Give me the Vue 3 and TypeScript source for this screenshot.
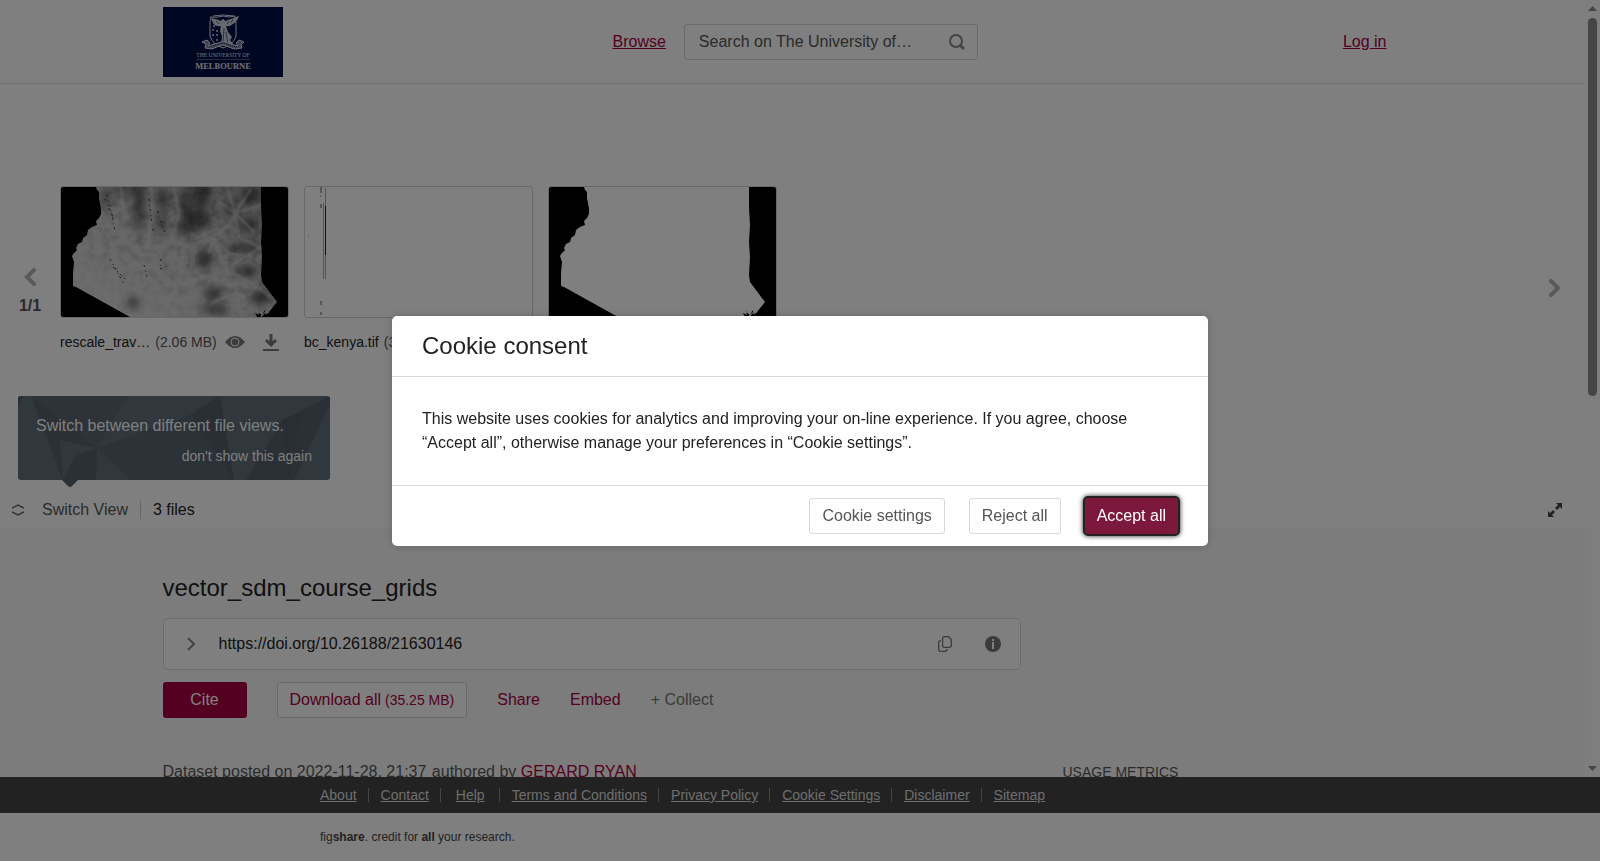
<script setup lang="ts">
import { ref } from 'vue'

interface FooterLink {
  label: string
  wide?: boolean
}

const query = ref('')
const footerLinks: FooterLink[] = [
  { label: 'About' },
  { label: 'Contact' },
  { label: 'Help', wide: true },
  { label: 'Terms and Conditions' },
  { label: 'Privacy Policy' },
  { label: 'Cookie Settings' },
  { label: 'Disclaimer' },
  { label: 'Sitemap' },
]

const files = [
  { id: 'travel', name: 'rescale_trav…', size: '(2.06 MB)' },
  { id: 'bc', name: 'bc_kenya.tif', size: '(33.1 MB)' },
  { id: 'mask', name: 'kenya_mask.tif', size: '(88 kB)' },
]

const land =
  'M35 0L36 3L38 5L38 11L39 16L40 22L40 27L38 31L35 34L36 38L31 40L27 43L26 48L22 51L21 55L17 57L15 61L16 63L13 66L11 69L13 75L12 86L12 99L15 100L69 130L196 130L194 126L198 128L197 124L201 128L204 123L205 127L208 125L216 115L201 95L200 88L201 70L200 55L201 38L200 20L200 0Z'

const darkSpots = [
  [78, 14, 5, 32], [102, 12, 6, 10], [137, 32, 13, 10], [140, 6, 9, 16], [124, 42, 10, 5],
  [62, 2, 12, 4], [143, 72, 8, 10], [152, 106, 10, 6], [154, 122, 14, 5], [188, 38, 8, 8],
  [200, 110, 10, 8], [170, 22, 6, 7], [72, 116, 6, 6], [175, 62, 6, 5], [186, 84, 12, 5],
  [101, 36, 3, 12], [45, 12, 4, 9], [190, 8, 10, 8], [188, 60, 8, 5], [124, 18, 5, 18],
]
</script>

<template>
  <div class="page">
    <div class="viewport">
      <div class="content">
        <header class="header">
          <div class="container header-row">
            <a href="#" class="logo" aria-label="The University of Melbourne">
              <svg viewBox="0 0 240 140" width="120" height="70">
                <rect width="240" height="140" fill="#000f46" />
                <svg viewBox="0 0 120 70" width="240" height="140">
                  <g fill="none" stroke="#dfe2ec" stroke-width="1">
                    <path d="M47 14Q49 12 47 10Q54 11 60 9Q66 11 72 9Q71 12 73 15V29Q71 37 60 41Q49 37 47 29Z" />
                    <path d="M50 9Q60 7 71 9" />
                  </g>
                  <g fill="#cfd3e0">
                    <path d="M48 11Q54 12 58 14Q60 10 62 14Q68 12 76 9Q74 15 70 17Q66 20 63 19L65 25L69 30L67 33L71 38L58 38L59 29L57 24L58 19Q53 20 50 16Z" />
                    <circle cx="50" cy="23" r="1" /><circle cx="54" cy="24" r="1" />
                    <circle cx="50" cy="28" r="1" /><circle cx="54" cy="28" r="1" /><circle cx="54" cy="33" r="1" />
                    <circle cx="51" cy="19" r="1" />
                  </g>
                  <path d="M61 21L60 37M63 25L65 37M53 14L56 17M66 14L64 17M70 12L68 16" stroke="#000f46" stroke-opacity="0.6" stroke-width="1" />
                  <path d="M39 35L44 33L47 36L45 39Q52 37 55 36Q60 33 65 36Q70 38 75 39L73 36L76 33L81 35L78 38L79 41L71 42Q66 40 60 38Q53 40 49 42L42 41L43 37Z" fill="#7d86a4" stroke="#dfe2ec" stroke-width="1" />
                  <path d="M46 40Q53 38 56 37Q60 35 64 37Q69 39 74 40" fill="none" stroke="#000f46" stroke-width="1" stroke-dasharray="1 1" />
                </svg>
                <path d="M67 105H173" stroke="#98a0bc" stroke-width="1" />
                <text x="120" y="100" text-anchor="middle" class="logo-small">THE UNIVERSITY OF</text>
                <text x="120" y="124" text-anchor="middle" class="logo-large">MELBOURNE</text>
              </svg>
            </a>
            <a href="#" class="link browse">Browse</a>
            <form class="search" @submit.prevent>
              <input v-model="query" type="text" aria-label="Search" placeholder="Search on The University of…" />
              <button type="submit" aria-label="Search">
                <svg viewBox="0 0 16 16" width="16" height="16">
                  <circle cx="7" cy="7" r="6" fill="none" stroke="#888" stroke-width="2" />
                  <path d="M11 11L15 15" stroke="#888" stroke-width="3" />
                </svg>
              </button>
            </form>
            <a href="#" class="link login">Log in</a>
          </div>
        </header>

        <section class="viewer">
          <div class="carousel">
            <div class="pager">
              <button type="button" class="icon-button" aria-label="Previous">
                <svg viewBox="0 0 12 18" width="12" height="18">
                  <path d="M10 2L3 9L10 16" fill="none" stroke="#b4b4b4" stroke-width="4" stroke-linecap="round" />
                </svg>
              </button>
              <span>1/1</span>
            </div>
            <ul class="files">
              <li v-for="file in files" :key="file.id">
                <div class="thumb">
                  <svg v-if="file.id === 'travel'" viewBox="0 0 227 130">
                    <defs>
                      <clipPath id="land-clip"><path :d="land" /></clipPath>
                      <linearGradient id="terrain" x1="0" y1="1" x2="1" y2="0">
                        <stop offset="0" stop-color="#e0e0e0" />
                        <stop offset="0.5" stop-color="#cccccc" />
                        <stop offset="1" stop-color="#969696" />
                      </linearGradient>
                      <filter id="soft" x="-50%" y="-50%" width="200%" height="200%"><feGaussianBlur stdDeviation="4" /></filter>
                      <filter id="vein"><feGaussianBlur stdDeviation="1" /></filter>
                      <filter id="grain" x="0" y="0" width="100%" height="100%">
                        <feTurbulence type="fractalNoise" baseFrequency="0.12" numOctaves="3" seed="8" />
                        <feColorMatrix values="0 0 0 0 0  0 0 0 0 0  0 0 0 0 0  0.5 0 0 0 -0.2" />
                      </filter>
                      <linearGradient id="fade" x1="0" y1="1" x2="1" y2="0">
                        <stop offset="0.2" stop-color="#333" />
                        <stop offset="0.6" stop-color="#fff" />
                      </linearGradient>
                      <mask id="grain-mask"><rect width="227" height="130" fill="url(#fade)" /></mask>
                    </defs>
                    <rect width="227" height="130" fill="#000" />
                    <g clip-path="url(#land-clip)">
                      <rect width="227" height="130" fill="url(#terrain)" />
                      <g fill="#222" fill-opacity="0.65" filter="url(#soft)">
                        <ellipse v-for="(s, i) in darkSpots" :key="i" :cx="s[0]" :cy="s[1]" :rx="s[2]" :ry="s[3]" />
                      </g>
                      <g mask="url(#grain-mask)"><rect width="227" height="130" filter="url(#grain)" /></g>
                      <g fill="none" stroke="#d0d0d0" stroke-opacity="0.7" stroke-width="2" filter="url(#vein)">
                        <path d="M110 55Q134 60 152 50T174 26L201 18M174 26L166 0M174 26L194 46M174 26L190 2M174 26L156 14M174 26L178 50L201 62M152 50L164 78L176 106L180 130" />
                        <path d="M126 94Q148 92 164 82T201 60M164 82L190 96L210 110M170 95L196 102M176 106L150 116M176 106L192 122M152 50L168 66L190 70M112 0L118 26L110 55L96 74" />
                        <path d="M90 0L92 30L86 60M60 0L64 30L60 55M150 44L134 52M134 62L130 80L126 94L142 112M152 50L148 66" />
                      </g>
                      <g fill="none" stroke="#333" stroke-width="1" stroke-dasharray="2 4 1 3">
                        <path d="M44 12L51 28L54 44M46 8L52 32M88 12L91 38L93 48M97 24L101 38L104 46M49 72L56 84L62 96M52 80L64 92M83 78L86 90M100 72L99 82L108 78" />
                      </g>
                    </g>
                    <path d="M195 124L201 127L200 130M201 129L205 124M204 127L208 125" stroke="#ddd" fill="none" />
                  </svg>
                  <svg v-else-if="file.id === 'bc'" viewBox="0 0 227 130">
                    <g fill="#aaa">
                      <rect x="15" y="0" width="2" height="6" /><rect x="15" y="17" width="2" height="4" />
                      <rect x="15" y="114" width="2" height="4" /><rect x="15" y="125" width="2" height="3" />
                      <rect x="15" y="8" width="1" height="2" /><rect x="3" y="49" width="1" height="1" />
                      <rect x="18" y="16" width="1" height="76" /><rect x="20" y="1" width="1" height="91" />
                    </g>
                    <rect x="20" y="19" width="1" height="49" fill="#222" />
                  </svg>
                  <svg v-else viewBox="0 0 227 130">
                    <rect width="227" height="130" fill="#000" />
                    <path :d="land" fill="#fff" />
                    <path d="M195 124L201 127L200 130M201 129L205 124M204 127L208 125" stroke="#fff" fill="none" />
                  </svg>
                </div>
                <div class="caption">
                  <span class="name">{{ file.name }}</span>
                  <span class="size">{{ file.size }}</span>
                  <button type="button" class="icon-button eye" aria-label="View file">
                    <svg viewBox="0 0 20 12" width="20" height="12">
                      <path d="M0 6Q5 0 10 0T20 6Q15 12 10 12T0 6Z" fill="#777" />
                      <circle cx="10" cy="6" r="4" fill="#777" stroke="#fff" stroke-width="1" />
                    </svg>
                  </button>
                  <button type="button" class="icon-button download" aria-label="Download file">
                    <svg viewBox="0 0 16 17" width="16" height="17" fill="none" stroke="#777">
                      <path d="M8 0V11M3 6L8 11L13 6" stroke-width="3" />
                      <path d="M0 16H16" stroke-width="2" />
                    </svg>
                  </button>
                </div>
              </li>
            </ul>
            <button type="button" class="icon-button next" aria-label="Next">
              <svg viewBox="0 0 12 18" width="12" height="18">
                <path d="M2 2L9 9L2 16" fill="none" stroke="#b4b4b4" stroke-width="4" stroke-linecap="round" />
              </svg>
            </button>
          </div>

          <div class="hint">
            <svg class="hint-art" viewBox="0 0 312 84" preserveAspectRatio="none">
              <path d="M13 0L79 52L42 44L45 84Z" fill="#56616b" />
              <path d="M13 0H110L79 52Z" fill="#5b6772" />
              <path d="M79 52L174 18L200 0L216 84H112Z" fill="#566570" />
              <path d="M79 52L57 60L45 84H78Z" fill="#56606b" />
              <path d="M174 18L202 0L216 84L190 46Z" fill="#545e6a" />
              <path d="M228 84L264 24L312 0V8L276 84Z" fill="#56616c" />
              <path d="M264 24L284 16L270 84Z" fill="#525c68" />
              <path d="M0 0H5L0 10Z" fill="#505c66" />
            </svg>
            <p>Switch between different file views.</p>
            <button type="button">don't show this again</button>
            <svg class="tail" viewBox="0 0 16 8" width="16" height="8"><path d="M0 0H16L10 6Q8 8 6 6Z" fill="#56616b" /></svg>
          </div>

          <div class="view-bar">
            <button type="button" class="switch">
              <svg viewBox="0 0 12 12" width="12" height="12" fill="none" stroke="#666" stroke-width="1.500">
                <path d="M0 4L6 1L12 4M0 8L6 11L12 8" />
              </svg>
              <span>Switch View</span>
            </button>
            <span class="count">3 files</span>
            <button type="button" class="icon-button expand" aria-label="Full screen">
              <svg viewBox="0 0 14 14" width="14" height="14">
                <path d="M8 0H14V6L12 4L9 7L7 5L10 2ZM0 8L2 10L5 7L7 9L4 12L6 14H0Z" fill="#444" />
              </svg>
            </button>
          </div>
        </section>

        <main class="details container">
          <div class="main-column">
            <h1>vector_sdm_course_grids</h1>
            <div class="doi">
              <button type="button" class="icon-button" aria-label="Show versions">
                <svg viewBox="0 0 9 14" width="9" height="14"><path d="M1 1L7 7L1 13" fill="none" stroke="#888" stroke-width="2" /></svg>
              </button>
              <span class="doi-text">https://doi.org/10.26188/21630146</span>
              <button type="button" class="icon-button" aria-label="Copy DOI">
                <svg viewBox="0 0 14 16" width="14" height="16" fill="none" stroke="#777" stroke-width="1.300">
                  <path d="M6.500 0.700H10.500L13.300 3.500V9.500Q13.300 11.300 11.500 11.300H6.500Q4.600 11.300 4.600 9.500V2.500Q4.600 0.700 6.500 0.700Z" />
                  <path d="M3 4.600Q0.700 4.600 0.700 6.500V13.500Q0.700 15.300 2.500 15.300H7Q9 15.300 9 13" />
                </svg>
              </button>
              <button type="button" class="icon-button" aria-label="DOI information">
                <svg viewBox="0 0 16 16" width="16" height="16">
                  <circle cx="8" cy="8" r="8" fill="#777" />
                  <path d="M7 3H9V5H7ZM7 6H9V13H7Z" fill="#fff" />
                </svg>
              </button>
            </div>
            <div class="actions">
              <button type="button" class="cite">Cite</button>
              <button type="button" class="download-all">Download all<small> (35.25 MB)</small></button>
              <button type="button" class="plain">Share</button>
              <button type="button" class="plain">Embed</button>
              <button type="button" class="plain muted">+ Collect</button>
            </div>
            <p class="posted">
              <span>Dataset posted on 2022-11-28, 21:37</span> authored by <a href="#">GERARD RYAN</a>
            </p>
          </div>
          <aside><h2>USAGE METRICS</h2></aside>
        </main>
      </div>
      <div class="scrollbar" aria-hidden="true">
        <svg viewBox="0 0 9 5" width="9" height="5"><path d="M0 5L4.500 0L9 5Z" fill="#8a8a8a" /></svg>
        <div class="track"><div class="handle"></div></div>
        <svg viewBox="0 0 9 5" width="9" height="5"><path d="M0 0L4.500 5L9 0Z" fill="#8a8a8a" /></svg>
      </div>
    </div>

    <footer>
      <nav class="footer-nav">
        <ul>
          <li v-for="link in footerLinks" :key="link.label" :class="{ wide: link.wide }">
            <a href="#">{{ link.label }}</a>
          </li>
        </ul>
      </nav>
      <p class="credit">fig<b>share</b>. credit for <b>all</b> your research.</p>
    </footer>

    <div class="overlay">
      <div class="modal" role="dialog" aria-modal="true" aria-labelledby="cookie-title">
        <h2 id="cookie-title">Cookie consent</h2>
        <p>
          This website uses cookies for analytics and improving your on-line experience. If you agree, choose
          “Accept all”, otherwise manage your preferences in “Cookie settings”.
        </p>
        <div class="modal-actions">
          <button type="button">Cookie settings</button>
          <button type="button">Reject all</button>
          <button type="button" class="accept">Accept all</button>
        </div>
      </div>
    </div>
  </div>
</template>

<style>
body {
  margin: 0;
}
</style>

<style scoped>
.page {
  display: flex;
  flex-direction: column;
  height: 100vh;
  overflow: hidden;
  background: #fff;
  color: #222;
  font: 16px/24px "Liberation Sans", Arial, sans-serif;
}
.page * {
  box-sizing: border-box;
}
h1, h2, p, ul {
  margin: 0;
  padding: 0;
  font-weight: normal;
}
ul {
  list-style: none;
}
svg {
  display: block;
}
button {
  font: inherit;
  color: inherit;
  cursor: pointer;
}
.icon-button {
  padding: 0;
  border: 0;
  background: none;
}
.viewport {
  display: flex;
  flex: 1;
  min-height: 0;
}
.content {
  flex: 1;
  min-width: 0;
  overflow: hidden;
  background: #f9f9f9;
}
.container {
  max-width: 1260px;
  margin: 0 auto;
}
.header {
  background: #fff;
  border-bottom: 1px solid #d9d9d9;
}
.header-row {
  display: flex;
  align-items: center;
  padding: 7px 0 6px;
}
.logo-small,
.logo-large {
  font-family: "Liberation Serif", serif;
  fill: #dfe2ec;
}
.logo-small {
  font-size: 11px;
}
.logo-large {
  font-size: 17px;
  font-weight: bold;
}
.link,
.posted a {
  color: #a80042;
}
.browse {
  margin: 0 18px 0 330px;
}
.search {
  display: flex;
  align-items: center;
  width: 294px;
  height: 36px;
  padding: 0 12px 0 14px;
  border: 1px solid #d5d5d5;
  border-radius: 3px;
}
.search input {
  flex: 1;
  min-width: 0;
  padding: 0;
  border: 0;
  outline: 0;
  background: none;
  font: inherit;
}
.search input::placeholder {
  color: #555;
  opacity: 1;
}
.search button {
  padding: 0;
  border: 0;
  background: none;
}
.login {
  margin: 0 36px 0 auto;
}
.viewer {
  background: #fff;
  padding-top: 102px;
}
.carousel {
  display: flex;
  align-items: center;
  height: 204px;
  padding-right: 24px;
}
.pager {
  display: flex;
  flex-direction: column;
  align-items: center;
  gap: 8px;
  width: 60px;
  padding-top: 9px;
  color: #555;
  font-weight: bold;
}
.files {
  display: flex;
  flex: 1;
  gap: 15px;
  align-self: flex-start;
}
.files li {
  width: 229px;
}
.thumb {
  height: 132px;
  border: 1px solid #d0d0d0;
  border-radius: 3px;
  overflow: hidden;
}
.caption {
  display: flex;
  align-items: center;
  height: 20px;
  margin-top: 14px;
  font-size: 14px;
  line-height: 20px;
  white-space: nowrap;
}
.size {
  margin-left: 5px;
  color: #555;
}
.eye {
  margin-left: 8px;
}
.download {
  margin: 0 10px 0 auto;
}
.hint {
  position: relative;
  display: flex;
  flex-direction: column;
  width: 312px;
  margin: 6px 0 0 18px;
  padding: 18px 18px 14px;
  border-radius: 3px;
  background: #606e7a;
  color: #fff;
}
.hint p,
.hint button {
  position: relative;
}
.hint button {
  align-self: flex-end;
  margin-top: 8px;
  padding: 0;
  border: 0;
  background: none;
  font-size: 14px;
  line-height: 20px;
}
.hint-art {
  position: absolute;
  inset: 0;
  width: 100%;
  height: 100%;
  border-radius: 3px;
}
.tail {
  position: absolute;
  left: 44px;
  top: 100%;
}
.view-bar {
  display: flex;
  align-items: center;
  height: 36px;
  margin-top: 12px;
  padding: 0 23px 0 12px;
}
.switch {
  display: flex;
  align-items: center;
  gap: 18px;
  padding: 0;
  border: 0;
  background: none;
  color: #555;
}
.count {
  margin-left: 12px;
  padding-left: 12px;
  border-left: 1px solid #ccc;
  line-height: 18px;
}
.expand {
  margin-left: auto;
}
.details {
  display: flex;
  gap: 42px;
  padding-top: 42px;
}
.main-column {
  flex: 858 1 0;
}
.details aside {
  flex: 360 1 0;
  padding-top: 190px;
}
.details h2 {
  color: #555;
  font-size: 14px;
  line-height: 24px;
}
h1 {
  font-size: 24px;
  line-height: 36px;
}
.doi {
  display: flex;
  align-items: center;
  height: 52px;
  margin-top: 12px;
  padding: 0 19px 0 23px;
  border: 1px solid #d9d9d9;
  border-radius: 5px;
  background: #fff;
}
.doi-text {
  flex: 1;
  margin-left: 23px;
}
.doi button + button {
  margin-left: 33px;
}
.actions {
  display: flex;
  gap: 30px;
  margin-top: 12px;
  color: #a80042;
}
.actions button {
  height: 36px;
  padding: 0;
  border: 0;
  border-radius: 3px;
  background: none;
}
.actions .cite {
  width: 84px;
  background: #a80040;
  color: #fff;
}
.actions .download-all {
  padding: 0 12px;
  border: 1px solid #d5d5d5;
  background: #fff;
}
.download-all small {
  font-size: 14px;
}
.actions .muted {
  color: #777;
}
.posted {
  margin-top: 42px;
  color: #555;
  line-height: 24px;
}
.posted span {
  margin-right: 1px;
}
.posted a {
  text-decoration: none;
}
.scrollbar {
  display: flex;
  flex-direction: column;
  align-items: center;
  width: 15px;
  padding: 6px 0;
  background: #fcfcfc;
}
.track {
  flex: 1;
  margin: 7px 0;
}
.handle {
  width: 9px;
  height: 51%;
  border-radius: 5px;
  background: #8a8a8a;
}
.footer-nav {
  background: #444;
}
.footer-nav ul,
.credit {
  max-width: 960px;
  margin: 0 auto;
}
.footer-nav ul {
  display: flex;
  align-items: center;
  height: 36px;
  font-size: 14px;
  line-height: 14px;
}
.footer-nav li + li {
  margin-left: 11px;
  padding-left: 12px;
  border-left: 1px solid #8a8a8a;
}
.footer-nav li.wide {
  padding: 0 3px 0 15px;
}
.footer-nav a {
  color: #ddd;
}
.credit {
  height: 48px;
  color: #444;
  font-size: 12px;
  line-height: 48px;
}
.overlay {
  position: fixed;
  inset: 0;
  display: flex;
  align-items: center;
  justify-content: center;
  background: rgba(0, 0, 0, 0.5);
}
.modal {
  width: 816px;
  border-radius: 5px;
  background: #fff;
  box-shadow: 0 0 10px rgba(0, 0, 0, 0.2);
}
.modal h2 {
  padding: 12px 30px;
  border-bottom: 1px solid #d9d9d9;
  font-size: 24px;
  line-height: 36px;
}
.modal p {
  padding: 30px;
}
.modal-actions {
  display: flex;
  justify-content: flex-end;
  gap: 24px;
  padding: 12px 30px;
  border-top: 1px solid #d9d9d9;
  color: #555;
}
.modal-actions button {
  height: 36px;
  padding: 0 12px;
  border: 1px solid #d9d9d9;
  border-radius: 3px;
  background: #fff;
}
.modal-actions .accept {
  border: 0;
  outline: 2px solid #222;
  background: #7b183b;
  box-shadow: 0 0 5px 2px #222;
  color: #fff;
}
</style>
